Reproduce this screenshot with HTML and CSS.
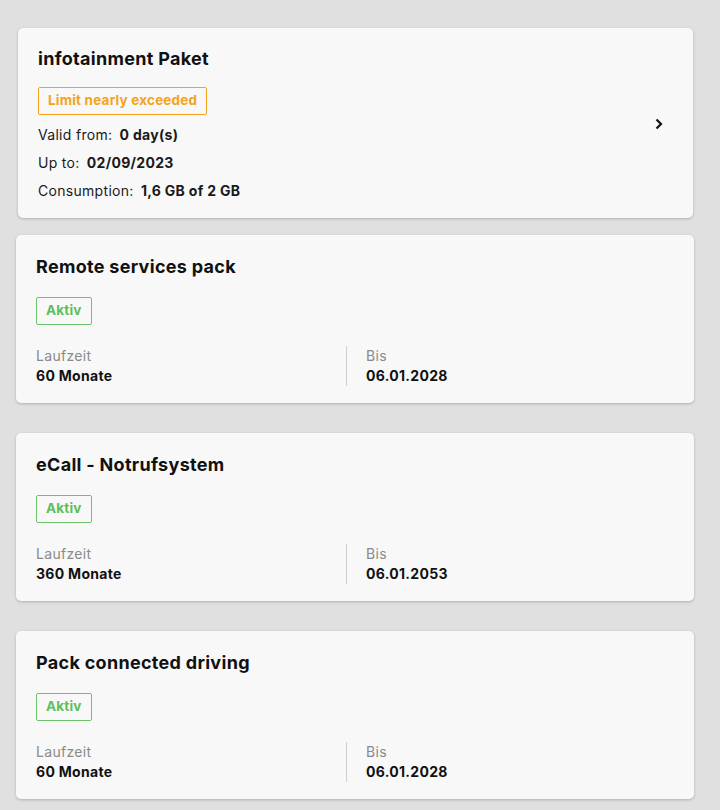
FILE: index.html
```html
<!DOCTYPE html>
<html lang="de">
<head>
    <meta charset="UTF-8">
    <meta name="viewport" content="width=device-width, initial-scale=1.0">
    <title>Services</title>
    <link rel="stylesheet" href="styles.css">
</head>
<body>
    <div class="list">
        <div class="card card-main">
            <div class="main-info">
                <h2 class="title">infotainment Paket</h2>
                <span class="badge warn">Limit nearly exceeded</span>
                <div class="rows">
                    <p class="row">Valid from: <b>0 day(s)</b></p>
                    <p class="row">Up to: <b>02/09/2023</b></p>
                    <p class="row">Consumption: <b>1,6 GB of 2 GB</b></p>
                </div>
            </div>
            <svg class="chevron" width="12" height="12" viewBox="0 0 12 12">
                <path d="M3.5 1.5 L8 6 L3.5 10.5" fill="none" stroke="#111" stroke-width="2.2"/>
            </svg>
        </div>

        <div class="card">
            <h2 class="title">Remote services pack</h2>
            <span class="badge ok">Aktiv</span>
            <div class="facts">
                <div class="fact">
                    <span class="label">Laufzeit</span>
                    <span class="value">60 Monate</span>
                </div>
                <div class="fact">
                    <span class="label">Bis</span>
                    <span class="value">06.01.2028</span>
                </div>
            </div>
        </div>

        <div class="card">
            <h2 class="title">eCall - Notrufsystem</h2>
            <span class="badge ok">Aktiv</span>
            <div class="facts">
                <div class="fact">
                    <span class="label">Laufzeit</span>
                    <span class="value">360 Monate</span>
                </div>
                <div class="fact">
                    <span class="label">Bis</span>
                    <span class="value">06.01.2053</span>
                </div>
            </div>
        </div>

        <div class="card">
            <h2 class="title">Pack connected driving</h2>
            <span class="badge ok">Aktiv</span>
            <div class="facts">
                <div class="fact">
                    <span class="label">Laufzeit</span>
                    <span class="value">60 Monate</span>
                </div>
                <div class="fact">
                    <span class="label">Bis</span>
                    <span class="value">06.01.2028</span>
                </div>
            </div>
        </div>
    </div>
</body>
</html>
```

FILE: styles.css
```css
* {
    box-sizing: border-box;
    margin: 0;
    padding: 0;
}
body {
    font-family: Inter, 'Noto Sans', sans-serif;
    background: #e0e0e0;
    color: #111;
}
.list {
    padding: 28px 26px 0 16px;
    display: flex;
    flex-direction: column;
}
.card {
    background: #f8f8f8;
    border-radius: 5px;
    box-shadow: 0 1px 3px rgba(0, 0, 0, 0.22);
    padding: 20px 20px 17px;
    margin-bottom: 30px;
}
.card:last-child {
    margin-bottom: 8px;
}
.card-main {
    margin: 0 1px 17px 2px;
    padding: 19px 28px 17px 20px;
    display: flex;
    align-items: center;
    justify-content: space-between;
}
.title {
    font-size: 18px;
    font-weight: 700;
    line-height: 24px;
    letter-spacing: 0.3px;
}
.badge {
    display: inline-block;
    margin-top: 18px;
    height: 28px;
    padding: 0 9px;
    border: 1.5px solid;
    border-radius: 2px;
    font-size: 13.5px;
    font-weight: 700;
    line-height: 25px;
    letter-spacing: 0.2px;
}
.card-main .badge {
    margin-top: 16px;
}
.warn {
    color: #f5a31c;
    border-color: #f5a31c;
}
.ok {
    color: #5cbf5a;
    border-color: #6cc56a;
}
.rows {
    margin-top: 10px;
    display: flex;
    flex-direction: column;
    gap: 8px;
}
.row {
    font-size: 14px;
    line-height: 20px;
    color: #1a1a1a;
    letter-spacing: 0.3px;
}
.row b {
    margin-left: 3px;
    font-weight: 700;
}
.facts {
    margin-top: 21px;
    display: grid;
    grid-template-columns: 1fr 1fr;
}
.fact {
    display: flex;
    flex-direction: column;
}
.fact + .fact {
    border-left: 1px solid #cfcfcf;
    padding-left: 19px;
    margin-left: -9px;
}
.label {
    font-size: 14px;
    line-height: 20px;
    color: #8a8a8a;
    letter-spacing: 0.3px;
}
.value {
    font-size: 14px;
    line-height: 20px;
    font-weight: 700;
    letter-spacing: 0.3px;
}
.chevron {
    flex-shrink: 0;
}
```
